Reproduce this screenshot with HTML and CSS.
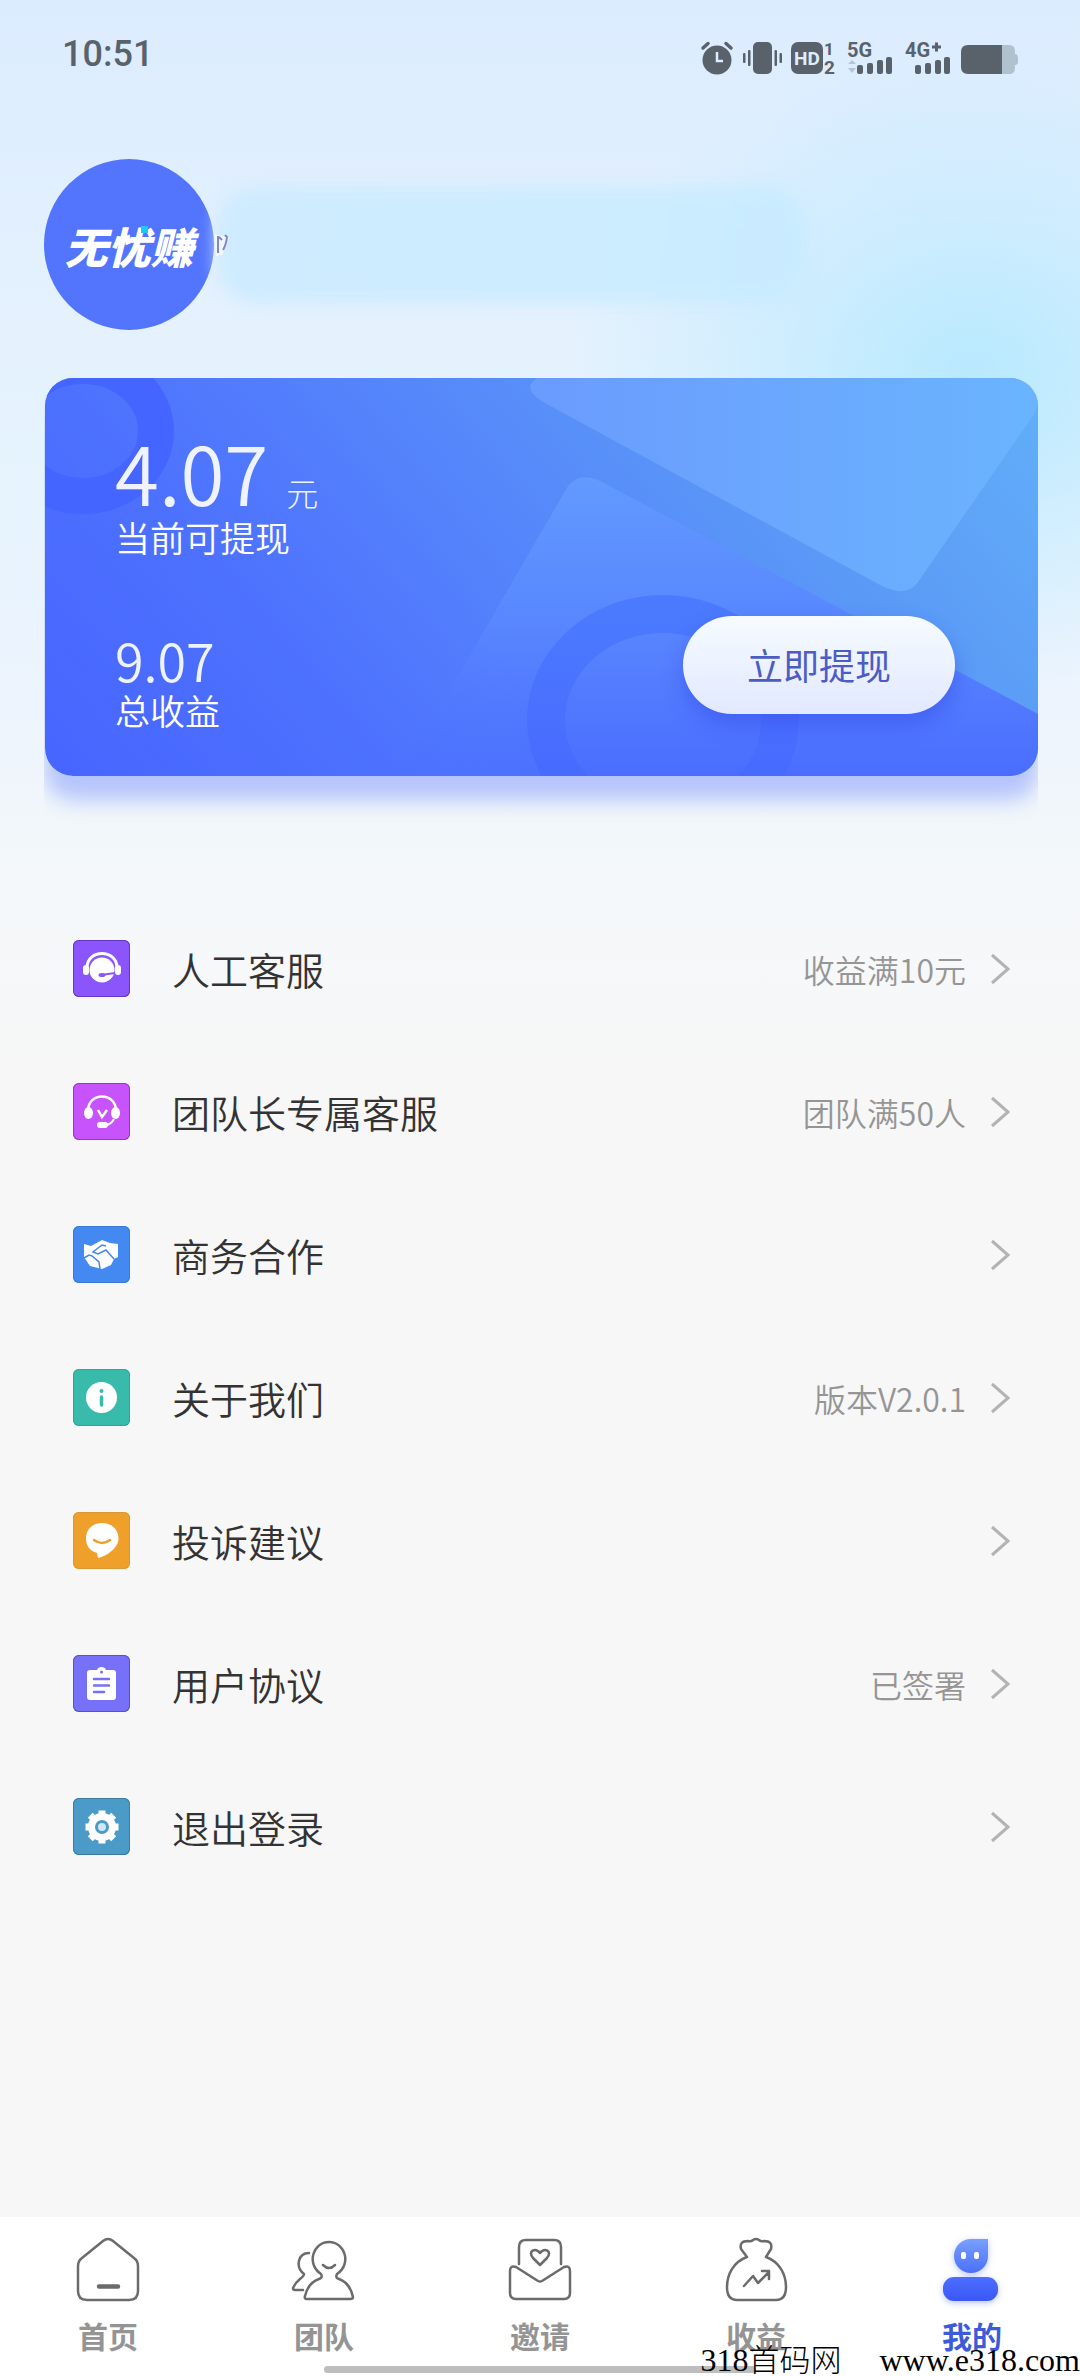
FILE: index.html
```html
<!DOCTYPE html>
<html lang="zh-CN">
<head>
    <meta charset="UTF-8">
    <meta name="viewport" content="width=device-width, initial-scale=1.0">
    <title>我的</title>
    <link rel="stylesheet" href="styles.css">
</head>
<body>
    <div class="page">
        <div class="status-bar">
            <span class="time">10:51</span>
            <svg class="status-icons" viewBox="0 0 320 36" width="320" height="36">
                <g fill="#59616b">
                    <circle cx="16" cy="20" r="14.5"/>
                    <path d="M2 8 L7 3.500M30 8 L25 3.500" stroke="#59616b" stroke-width="3.500" stroke-linecap="round"/>
                    <path d="M16 12V21H22" fill="none" stroke="#dfeefe" stroke-width="2.500"/>
                    <rect x="52" y="2" width="19" height="32" rx="5"/>
                    <rect x="47" y="10" width="2.500" height="16" rx="1"/>
                    <rect x="42" y="13" width="2.500" height="10" rx="1"/>
                    <rect x="73.500" y="10" width="2.500" height="16" rx="1"/>
                    <rect x="78.500" y="13" width="2.500" height="10" rx="1"/>
                    <rect x="90" y="2" width="32" height="32" rx="7"/>
                </g>
                <g class="status-text">
                    <text x="93" y="25" font-size="19" fill="#dfeefe">HD</text>
                    <text x="123" y="15" font-size="17">1</text>
                    <text x="123" y="34" font-size="19">2</text>
                    <text x="146" y="17" font-size="20">5G</text>
                    <text x="204" y="17" font-size="20">4G</text>
                    <path d="M231 7H240M235.500 2.500V11.500" stroke="#59616b" stroke-width="3"/>
                </g>
                <path d="M147 24 L151 20 L155 24 Z M147 28 L155 28 L151 33 Z" fill="#b5c5d6"/>
                <g fill="#59616b">
                    <rect x="156" y="25" width="6" height="9" rx="2"/>
                    <rect x="166" y="23" width="6" height="11" rx="2"/>
                    <rect x="176" y="20" width="6" height="14" rx="2"/>
                    <rect x="185" y="17" width="6" height="17" rx="2"/>
                    <rect x="214" y="25" width="6" height="9" rx="2"/>
                    <rect x="224" y="23" width="6" height="11" rx="2"/>
                    <rect x="234" y="20" width="6" height="14" rx="2"/>
                    <rect x="243" y="17" width="6" height="17" rx="2"/>
                </g>
                <path d="M301 5H308Q314 5 314 11V14Q317 14 317 18V22Q317 25 314 25V28Q314 34 308 34H301Z" fill="#b1c2cf"/>
                <path d="M301 5H267Q260 5 260 12V27Q260 34 267 34H301Z" fill="#59616b"/>
            </svg>
        </div>

        <div class="profile">
            <div class="avatar">无忧赚<i class="avatar-dot"></i></div>
            <svg class="nick-rest" viewBox="0 0 16 24" width="16" height="24">
                <path d="M0 1L15 5L8 22L2 23Z" fill="#f4f6ff"/>
                <path d="M4 3V20M5 4L8 7M11 2L13 4Q12 12 9 17" stroke="#7f86c9" stroke-width="2" fill="none"/>
            </svg>
            <div class="nick-mask"></div>
        </div>

        <div class="card-wrap">
            <div class="card">
                <svg class="card-art" viewBox="0 0 993 398" preserveAspectRatio="none">
                    <defs>
                        <linearGradient id="upper" x1="0" y1="0" x2="1" y2="0">
                            <stop offset="0" stop-color="#6a9bff"/>
                            <stop offset="1" stop-color="#6ab4fe"/>
                        </linearGradient>
                        <linearGradient id="lower" x1="0" y1="0" x2="0" y2="1">
                            <stop offset="0" stop-color="#629aff"/>
                            <stop offset="0.500" stop-color="#5886fe"/>
                            <stop offset="1" stop-color="#4a6dff"/>
                        </linearGradient>
                        <linearGradient id="edge" x1="355" y1="398" x2="470" y2="300" gradientUnits="userSpaceOnUse">
                            <stop offset="0" stop-color="#000"/>
                            <stop offset="1" stop-color="#fff"/>
                        </linearGradient>
                        <mask id="soft">
                            <rect width="993" height="398" fill="url(#edge)"/>
                        </mask>
                        <linearGradient id="ring" x1="0" y1="0" x2="0" y2="1">
                            <stop offset="0" stop-color="#4b7afe"/>
                            <stop offset="1" stop-color="#4665ff"/>
                        </linearGradient>
                    </defs>
                    <ellipse cx="38" cy="53" rx="73" ry="65" fill="none" stroke="#4465ff" stroke-width="36"/>
                    <path d="M492 0Q476 10 498 24L837 208Q862 220 873 204L989 36L993 26V0Z" fill="url(#upper)"/>
                    <path d="M355 398L523 108Q536 92 559 105L993 336V398Z" fill="url(#lower)" mask="url(#soft)"/>
                    <ellipse cx="618" cy="342" rx="117" ry="106" fill="none" stroke="url(#ring)" stroke-width="38"/>
                </svg>
                <div class="balance">
                    <p class="amount">4.07 <small>元</small></p>
                    <p class="caption">当前可提现</p>
                    <p class="total">9.07</p>
                    <p class="caption">总收益</p>
                </div>
                <button class="withdraw" type="button">立即提现</button>
            </div>
        </div>

        <nav class="menu">
            <a class="row" href="#">
                <svg class="row-icon service" viewBox="0 0 57 57">
                    <circle cx="29" cy="30" r="12.500" fill="#fff"/>
                    <path d="M14 27C15 9 43 9 44 27" fill="none" stroke="#fff" stroke-width="3"/>
                    <rect x="10" y="25" width="6" height="10" rx="3" fill="#fff"/>
                    <rect x="42" y="25" width="6" height="10" rx="3" fill="#fff"/>
                    <path d="M28 35L42 33" stroke="#8a55fb" stroke-width="2"/>
                    <ellipse cx="29" cy="35" rx="3.500" ry="2" fill="#8a55fb"/>
                </svg>
                <span class="row-title">人工客服</span>
                <span class="row-note">收益满10元</span>
                <svg class="arrow" viewBox="0 0 20 32"><path d="M2 2L18 16L2 30"/></svg>
            </a>
            <a class="row" href="#">
                <svg class="row-icon leader" viewBox="0 0 57 57">
                    <path d="M15 27C16 9 42 9 43 27" fill="none" stroke="#fff" stroke-width="2.500"/>
                    <ellipse cx="15.500" cy="30" rx="4.500" ry="6" fill="#fff"/>
                    <ellipse cx="42.500" cy="30" rx="4.500" ry="6" fill="#fff"/>
                    <path d="M25 27L29 34L34 27" fill="none" stroke="#fff" stroke-width="2.500"/>
                    <path d="M41 36Q38 42 32 42" fill="none" stroke="#fff" stroke-width="2"/>
                    <rect x="24" y="39" width="11" height="6" rx="3" fill="#fff"/>
                </svg>
                <span class="row-title">团队长专属客服</span>
                <span class="row-note">团队满50人</span>
                <svg class="arrow" viewBox="0 0 20 32"><path d="M2 2L18 16L2 30"/></svg>
            </a>
            <a class="row" href="#">
                <svg class="row-icon business" viewBox="0 0 57 57">
                    <path d="M11 18L18 20L29 14L37 17L45 18V31L41 33L38 39L29 43L17 40L13 34L11 31Z" fill="#fff"/>
                    <path d="M11 32L16 29L19 30L26 36L27 43M41 33L33 24L25 28L20 26L29 19L33 20" fill="none" stroke="#4389f1" stroke-width="1.500"/>
                </svg>
                <span class="row-title">商务合作</span>
                <svg class="arrow" viewBox="0 0 20 32"><path d="M2 2L18 16L2 30"/></svg>
            </a>
            <a class="row" href="#">
                <svg class="row-icon about" viewBox="0 0 57 57">
                    <circle cx="28.500" cy="28.500" r="15.500" fill="#fff"/>
                    <circle cx="28.500" cy="22" r="2" fill="#38bbab"/>
                    <path d="M28.500 28V36" stroke="#38bbab" stroke-width="3.500" stroke-linecap="round"/>
                </svg>
                <span class="row-title">关于我们</span>
                <span class="row-note">版本V2.0.1</span>
                <svg class="arrow" viewBox="0 0 20 32"><path d="M2 2L18 16L2 30"/></svg>
            </a>
            <a class="row" href="#">
                <svg class="row-icon feedback" viewBox="0 0 57 57">
                    <path d="M29 11C39 11 45.500 18 45.500 26.500C45.500 36 34 44 25 46L24 41C17 39 13 34 13 26.500C13 18 19 11 29 11Z" fill="#fff"/>
                    <path d="M21 28Q29 34 37 28" fill="none" stroke="#efa02b" stroke-width="2.500" stroke-linecap="round"/>
                </svg>
                <span class="row-title">投诉建议</span>
                <svg class="arrow" viewBox="0 0 20 32"><path d="M2 2L18 16L2 30"/></svg>
            </a>
            <a class="row" href="#">
                <svg class="row-icon terms" viewBox="0 0 57 57">
                    <path d="M17 15H24Q25 12 28.500 12Q32 12 33 15H40Q43 15 43 18V42Q43 45 40 45H17Q14 45 14 42V18Q14 15 17 15Z" fill="#fff"/>
                    <circle cx="28.500" cy="17" r="1.500" fill="#7770f8"/>
                    <path d="M21 24H36M21 30.500H36M21 37H31" stroke="#7770f8" stroke-width="2.500" stroke-linecap="round"/>
                </svg>
                <span class="row-title">用户协议</span>
                <span class="row-note">已签署</span>
                <svg class="arrow" viewBox="0 0 20 32"><path d="M2 2L18 16L2 30"/></svg>
            </a>
            <a class="row" href="#">
                <svg class="row-icon logout" viewBox="0 0 57 57">
                    <circle cx="29" cy="29" r="10.500" fill="none" stroke="#fff" stroke-width="7"/>
                    <circle cx="29" cy="29" r="4" fill="#cfe8f4"/>
                    <path d="M29 12.500V18M29 40V45.500M12.500 29H18M40 29H45.500M17.300 17.300L21 21M37 37L40.700 40.700M40.700 17.300L37 21M21 37L17.300 40.700" stroke="#fff" stroke-width="7"/>
                </svg>
                <span class="row-title">退出登录</span>
                <svg class="arrow" viewBox="0 0 20 32"><path d="M2 2L18 16L2 30"/></svg>
            </a>
        </nav>

        <nav class="tab-bar">
            <a class="tab" href="#">
                <svg class="tab-icon" viewBox="0 0 66 66">
                    <path d="M28 4Q33 0 38 4L59 21Q63 24 63 29V54Q63 63 54 63H12Q3 63 3 54V29Q3 24 7 21Z"/>
                    <path d="M24 49.500H43" stroke-width="4.500"/>
                </svg>
                首页
            </a>
            <a class="tab" href="#">
                <svg class="tab-icon" viewBox="0 0 66 66">
                    <path d="M30 37C15 27 22 5 38 5C54 5 61 27 46 37Q44 41 48 42Q59 46 62 60Q62 62 59 62H16Q13 62 14 59Q17 46 28 42Q32 41 30 37Z"/>
                    <path d="M32 28Q38 34 44 28M18 16C7 16 4 30 13 37Q13 39 9 42Q4 46 2 51Q2 53 4 53H12"/>
                </svg>
                团队
            </a>
            <a class="tab" href="#">
                <svg class="tab-icon" viewBox="0 0 66 66">
                    <path d="M12 27V10Q12 3 19 3H47Q54 3 54 10V27M33 28L26 21C20 14 29 10 33 16C37 10 46 14 40 21ZM9 30L31 44Q33 45 35 44L57 30Q63 28 63 34V56Q63 62 57 62H9Q3 62 3 56V34Q3 28 9 30Z"/>
                </svg>
                邀请
            </a>
            <a class="tab" href="#">
                <svg class="tab-icon" viewBox="0 0 66 66">
                    <path d="M24 20L18 12Q16 4 25 4Q28 5 30 3Q33 1 36 3Q38 5 41 4Q50 4 48 12L43 20C57 25 63 38 63 50Q63 63 53 63H14Q4 63 4 50C4 38 10 25 24 20Z"/>
                    <path d="M21 49L30 39L35 46L46 35M39 34H46V42"/>
                </svg>
                收益
            </a>
            <a class="tab active" href="#">
                <svg class="tab-icon mine" viewBox="0 0 66 66">
                    <defs>
                        <linearGradient id="head" x1="0.500" y1="0" x2="0.500" y2="1">
                            <stop offset="0" stop-color="#79a0ff"/>
                            <stop offset="1" stop-color="#4b70fa"/>
                        </linearGradient>
                        <linearGradient id="torso" x1="0" y1="0" x2="0" y2="1">
                            <stop offset="0" stop-color="#4c6eff"/>
                            <stop offset="1" stop-color="#3a57f5"/>
                        </linearGradient>
                    </defs>
                    <path d="M32 2H49V19C49 29 41 36 32 36C23 36 15 29 15 19C15 9 23 2 32 2Z" fill="url(#head)"/>
                    <rect x="22" y="15" width="5" height="7" rx="2" fill="#fff"/>
                    <rect x="35" y="15" width="5" height="7" rx="2" fill="#fff"/>
                    <rect x="4" y="40" width="55" height="24" rx="11" fill="url(#torso)"/>
                </svg>
                我的
            </a>
        </nav>
        <div class="gesture-bar"></div>
        <p class="watermark"><span>318<b>首码网</b></span><span>www.e318.com</span></p>
    </div>
</body>
</html>
```

FILE: styles.css
```css
* {
    box-sizing: border-box;
}
body {
    margin: 0;
    background-color: #f7f7f7;
    font-family: "Noto Sans CJK SC", sans-serif;
    font-weight: 350;
    color: #333;
}
p {
    margin: 0;
}
a {
    color: inherit;
    text-decoration: none;
}
.page {
    position: relative;
    display: flex;
    flex-direction: column;
    min-height: 100vh;
    background:
        radial-gradient(ellipse 400px 320px at 90% 370px, #b8e9ff, rgba(190, 234, 255, 0.6) 45%, rgba(200, 236, 255, 0)),
        linear-gradient(#dbecfe 0, #e4f1fe 300px, #e5f3fd 440px, #edf4fd 720px, #f2f7fa 840px, #f5f8fa 920px, #f7f7f7 1060px);
}

/* status bar */
.status-bar {
    display: flex;
    justify-content: space-between;
    padding: 30px 59px 0 62px;
    height: 100px;
}
.time {
    font-family: Roboto, sans-serif;
    font-size: 36px;
    font-weight: 500;
    line-height: 48px;
    color: #59616b;
}
.status-icons {
    margin-top: 10px;
    overflow: visible;
}
.status-text {
    font-family: Roboto, sans-serif;
    font-weight: 700;
    fill: #59616b;
}

/* avatar and name */
.profile {
    display: flex;
    align-items: center;
    padding: 0 44px;
    margin-top: 59px;
    height: 171px;
}
.avatar {
    position: relative;
    display: flex;
    align-items: center;
    justify-content: center;
    flex: none;
    width: 170px;
    height: 171px;
    border-radius: 50%;
    background-color: #5375fd;
    color: #fff;
    font-size: 43px;
    font-weight: 900;
    font-style: italic;
}
.avatar-dot {
    position: absolute;
    left: 97px;
    top: 67px;
    width: 7px;
    height: 7px;
    background-color: #1fc8f5;
}
.nick-rest {
    flex: none;
    z-index: 1;
}
.nick-mask {
    flex: 0 1 590px;
    height: 116px;
    margin-left: -14px;
    border-radius: 40px;
    background: linear-gradient(100deg, #cfebff, #cdecff 60%, #c9ebff);
    filter: blur(8px);
}

/* balance card */
.card-wrap {
    margin: 48px 42px 0 44px;
    padding: 0 0 60px 1px;
    overflow: hidden;
}
.card {
    position: relative;
    display: flex;
    justify-content: space-between;
    align-items: flex-end;
    height: 398px;
    padding: 0 83px 62px 70px;
    border-radius: 28px;
    background: linear-gradient(50deg, #4765ff 0%, #4d71fe 26%, #5585fb 50%, #5b9bf6 75%, #62aff9 100%);
    box-shadow: 0 24px 20px rgba(80, 110, 250, 0.36);
    color: #fff;
}
.card-art {
    position: absolute;
    left: 0;
    top: 0;
    width: 100%;
    height: 100%;
    border-radius: 28px;
}
.balance {
    position: relative;
    align-self: flex-start;
    padding-top: 49px;
}
.amount {
    font-size: 80px;
    line-height: 88px;
    color: #eef3ff;
}
.amount small {
    font-size: 32px;
    font-weight: 300;
    line-height: 32px;
}
.caption {
    font-size: 35px;
    line-height: 44px;
}
.total {
    margin-top: 73px;
    font-size: 52px;
    line-height: 56px;
    color: #eef3ff;
}
.withdraw {
    position: relative;
    width: 272px;
    height: 98px;
    padding: 0 0 2px 0;
    border: none;
    border-radius: 49px;
    background: linear-gradient(#f6fbff, #e2e9ff);
    box-shadow: 0 10px 20px rgba(50, 70, 230, 0.45);
    color: #4c5cc6;
    font-family: inherit;
    font-size: 36px;
}

/* menu */
.menu {
    margin-top: 61px;
    padding: 0 70px 0 73px;
}
.row {
    display: flex;
    align-items: center;
    height: 143px;
}
.row-icon {
    width: 57px;
    height: 57px;
    margin-right: 42px;
    border-radius: 6px;
}
.service {
    background-color: #8a55fb;
    box-shadow: inset 0 0 0 1px #6537c4;
}
.leader {
    background-color: #c653fb;
    box-shadow: inset 0 0 0 1px #9637c4;
}
.business {
    background-color: #4389f1;
    box-shadow: inset 0 0 0 1px #3c79d3;
}
.about {
    background-color: #38bbab;
    box-shadow: inset 0 0 0 1px #35a497;
}
.feedback {
    background-color: #efa02b;
    box-shadow: inset 0 0 0 1px #d99838;
}
.terms {
    background-color: #7770f8;
    box-shadow: inset 0 0 0 1px #5a54b8;
}
.logout {
    background-color: #4b9bc9;
    box-shadow: inset 0 0 0 1px #3d7a9c;
}
.row-title {
    font-size: 38px;
}
.row-note {
    margin-left: auto;
    font-size: 32px;
    color: #959595;
}
.arrow {
    width: 20px;
    height: 32px;
    margin-left: 24px;
    fill: none;
    stroke: #b3b3b3;
    stroke-width: 3;
}
.row-title + .arrow {
    margin-left: auto;
}

/* bottom tabs */
.tab-bar {
    display: flex;
    height: 159px;
    margin-top: auto;
    background-color: #fff;
}
.tab {
    display: flex;
    flex: 1;
    flex-direction: column;
    align-items: center;
    padding-top: 20px;
    font-size: 30px;
    font-weight: 700;
    line-height: 40px;
    color: #949494;
}
.tab-icon {
    width: 66px;
    height: 66px;
    margin-bottom: 12px;
    fill: none;
    stroke: #6b6b6b;
    stroke-width: 2.5;
    stroke-linecap: round;
    stroke-linejoin: round;
}
.mine {
    stroke: none;
    overflow: visible;
    filter: drop-shadow(0 2px 3px rgba(75, 105, 255, 0.4));
}
.active {
    color: #3d5bd9;
}
.gesture-bar {
    position: absolute;
    left: 30%;
    bottom: 3px;
    width: 40%;
    height: 7px;
    border-radius: 4px;
    background-color: #bdbdbd;
}
.watermark {
    position: absolute;
    right: 0;
    bottom: 0;
    display: flex;
    gap: 38px;
    font-family: "Liberation Serif", "Noto Sans CJK SC", serif;
    font-size: 32px;
    font-weight: 400;
    line-height: 30px;
    color: #000;
}
.watermark b {
    font-size: 31px;
    font-weight: 300;
}
```
